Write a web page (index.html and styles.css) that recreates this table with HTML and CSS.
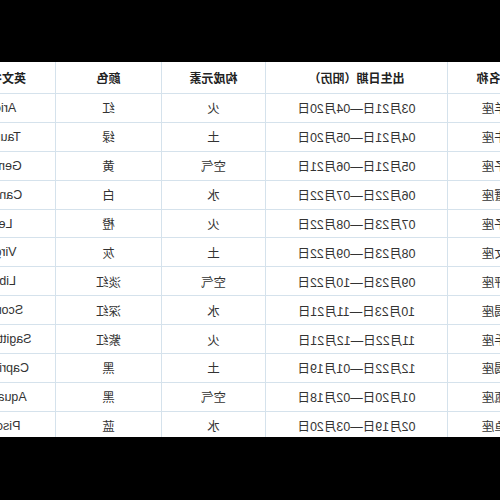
FILE: index.html
```html
<!DOCTYPE html>
<html lang="zh">
<head>
<meta charset="utf-8">
<title>星座表</title>
<link rel="stylesheet" href="styles.css">
</head>
<body>
<div class="frame">
  <div class="bar"></div>
  <div class="view">
    <div class="mirror">
      <div class="grid">
        <div class="cell head">中文名称</div>
        <div class="cell head">出生日期（阳历）</div>
        <div class="cell head">构成元素</div>
        <div class="cell head">颜色</div>
        <div class="cell head">英文名称</div>

        <div class="cell">白羊座</div><div class="cell">03月21日—04月20日</div><div class="cell">火</div><div class="cell">红</div><div class="cell">Aries</div>
        <div class="cell">金牛座</div><div class="cell">04月21日—05月20日</div><div class="cell">土</div><div class="cell">绿</div><div class="cell">Taurus</div>
        <div class="cell">双子座</div><div class="cell">05月21日—06月21日</div><div class="cell">空气</div><div class="cell">黄</div><div class="cell">Gemini</div>
        <div class="cell">巨蟹座</div><div class="cell">06月22日—07月22日</div><div class="cell">水</div><div class="cell">白</div><div class="cell">Cancer</div>
        <div class="cell">狮子座</div><div class="cell">07月23日—08月22日</div><div class="cell">火</div><div class="cell">橙</div><div class="cell">Leo</div>
        <div class="cell">处女座</div><div class="cell">08月23日—09月22日</div><div class="cell">土</div><div class="cell">灰</div><div class="cell">Virgo</div>
        <div class="cell">天秤座</div><div class="cell">09月23日—10月22日</div><div class="cell">空气</div><div class="cell">淡红</div><div class="cell">Libra</div>
        <div class="cell">天蝎座</div><div class="cell">10月23日—11月21日</div><div class="cell">水</div><div class="cell">深红</div><div class="cell">Scorpio</div>
        <div class="cell">射手座</div><div class="cell">11月22日—12月21日</div><div class="cell">火</div><div class="cell">紫红</div><div class="cell">Sagittarius</div>
        <div class="cell">摩羯座</div><div class="cell">12月22日—01月19日</div><div class="cell">土</div><div class="cell">黑</div><div class="cell">Capricorn</div>
        <div class="cell">水瓶座</div><div class="cell">01月20日—02月18日</div><div class="cell">空气</div><div class="cell">黑</div><div class="cell">Aquarius</div>
        <div class="cell">双鱼座</div><div class="cell">02月19日—03月20日</div><div class="cell">水</div><div class="cell">蓝</div><div class="cell">Pisces</div>
      </div>
    </div>
  </div>
  <div class="bar"></div>
</div>
</body>
</html>
```

FILE: styles.css
```css
html, body {
  margin: 0;
  padding: 0;
  background: #000;
}
.frame {
  width: 500px;
  height: 500px;
  display: flex;
  flex-direction: column;
  background: #000;
}
.bar {
  flex: 1;
  background: #000;
}
.bar:first-child {
  flex: 0 0 62px;
}
.view {
  flex: 0 0 375px;
  height: 375px;
  overflow: hidden;
  background: #fff;
}
.mirror {
  width: 500px;
  height: 375px;
  transform: scaleX(-1);
  overflow: hidden;
}
.grid {
  display: grid;
  margin-left: -53px;
  width: 604px;
  grid-template-columns: 105px 181px 103px 105px 106px;
  grid-template-rows: 31px;
  grid-auto-rows: 27.9px;
  column-gap: 1px;
  row-gap: 1px;
  background: #d5e2ec;
  font-family: "Liberation Sans", "Noto Sans CJK SC", sans-serif;
  font-size: 12.5px;
  color: #333;
}
.cell {
  background: #fff;
  display: flex;
  align-items: center;
  justify-content: center;
  white-space: nowrap;
}
.head {
  font-size: 12px;
  font-weight: bold;
  color: #222;
}
```
